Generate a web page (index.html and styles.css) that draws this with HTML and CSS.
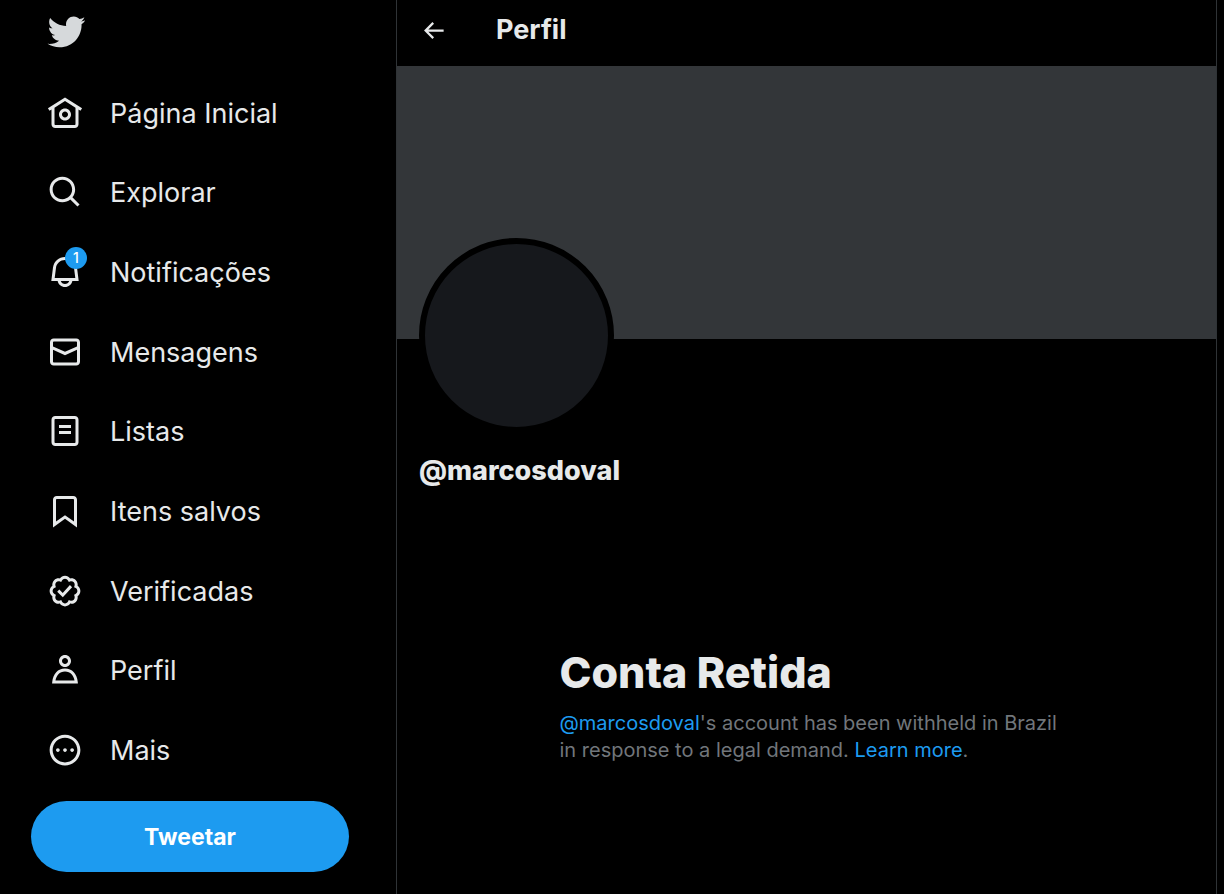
FILE: index.html
```html
<!doctype html>
<html lang="pt">
<head>
<meta charset="UTF-8">
<title>Perfil / Twitter</title>
<link rel="stylesheet" href="styles.css">
</head>
<body>
<div class="layout">
	<header class="sidebar">
		<a href="#" class="logo" aria-label="Twitter">
			<svg viewBox="0 0 24 24"><path d="M23.643 4.937c-.835.37-1.732.62-2.675.733.962-.576 1.7-1.49 2.048-2.578-.9.534-1.897.922-2.958 1.13-.85-.904-2.06-1.47-3.4-1.47-2.572 0-4.658 2.086-4.658 4.66 0 .364.042.718.12 1.06-3.873-.195-7.304-2.05-9.602-4.868-.4.69-.63 1.49-.63 2.342 0 1.616.823 3.043 2.072 3.878-.764-.025-1.482-.234-2.11-.583v.06c0 2.257 1.605 4.14 3.737 4.568-.392.106-.803.162-1.227.162-.3 0-.593-.028-.877-.082.593 1.85 2.313 3.198 4.352 3.234-1.595 1.25-3.604 1.995-5.786 1.995-.376 0-.747-.022-1.112-.065 2.062 1.323 4.51 2.093 7.14 2.093 8.57 0 13.255-7.098 13.255-13.254 0-.2-.005-.402-.014-.602.91-.658 1.7-1.477 2.323-2.41z"/></svg>
		</a>
		<nav class="menu">
			<a href="#" class="item">
				<span class="icon"><svg viewBox="0 0 24 24"><path d="M12 9c-2.209 0-4 1.791-4 4s1.791 4 4 4 4-1.791 4-4-1.791-4-4-4zm0 6c-1.105 0-2-.895-2-2s.895-2 2-2 2 .895 2 2-.895 2-2 2zm0-13.304L.622 8.807l1.06 1.696L3 9.679V19.5C3 20.881 4.119 22 5.5 22h13c1.381 0 2.5-1.119 2.5-2.5V9.679l1.318.824 1.06-1.696L12 1.696zM19 19.5c0 .276-.224.5-.5.5h-13c-.276 0-.5-.224-.5-.5V8.429l7-4.375 7 4.375V19.5z"/></svg></span>
				<span class="label">Página Inicial</span>
			</a>
			<a href="#" class="item">
				<span class="icon"><svg viewBox="0 0 24 24"><path d="M10.25 3.75c-3.59 0-6.5 2.91-6.5 6.5s2.91 6.5 6.5 6.5c1.795 0 3.419-.726 4.596-1.904 1.178-1.177 1.904-2.801 1.904-4.596 0-3.59-2.91-6.5-6.5-6.5zm-8.5 6.5c0-4.694 3.806-8.5 8.5-8.5s8.5 3.806 8.5 8.5c0 1.986-.682 3.815-1.824 5.262l4.781 4.781-1.414 1.414-4.781-4.781c-1.447 1.142-3.276 1.824-5.262 1.824-4.694 0-8.5-3.806-8.5-8.5z"/></svg></span>
				<span class="label">Explorar</span>
			</a>
			<a href="#" class="item">
				<span class="icon"><svg viewBox="0 0 24 24"><path d="M19.993 9.042C19.48 5.017 16.054 2 11.996 2s-7.49 3.021-7.999 7.051L2.866 18H7.1c.463 2.282 2.481 4 4.9 4s4.437-1.718 4.9-4h4.236l-1.143-8.958zM12 20c-1.306 0-2.417-.835-2.829-2h5.658c-.412 1.165-1.523 2-2.829 2zm-6.866-4l.847-6.698C6.364 6.272 8.941 4 11.996 4s5.627 2.268 6.013 5.295L18.864 16H5.134z"/></svg><span class="badge">1</span></span>
				<span class="label">Notificações</span>
			</a>
			<a href="#" class="item">
				<span class="icon"><svg viewBox="0 0 24 24"><path d="M1.998 5.5c0-1.381 1.119-2.5 2.5-2.5h15c1.381 0 2.5 1.119 2.5 2.5v13c0 1.381-1.119 2.5-2.5 2.5h-15c-1.381 0-2.5-1.119-2.5-2.5v-13zm2.5-.5c-.276 0-.5.224-.5.5v2.764l8 3.638 8-3.636V5.5c0-.276-.224-.5-.5-.5h-15zm15.5 5.463l-8 3.636-8-3.638V18.5c0 .276.224.5.5.5h15c.276 0 .5-.224.5-.5v-8.037z"/></svg></span>
				<span class="label">Mensagens</span>
			</a>
			<a href="#" class="item">
				<span class="icon"><svg viewBox="0 0 24 24"><path d="M3 4.5C3 3.12 4.12 2 5.5 2h13C19.88 2 21 3.12 21 4.5v15c0 1.38-1.12 2.5-2.5 2.5h-13C4.12 22 3 20.88 3 19.5v-15zM5.5 4c-.28 0-.5.22-.5.5v15c0 .28.22.5.5.5h13c.28 0 .5-.22.5-.5v-15c0-.28-.22-.5-.5-.5h-13zM16 10H8V8h8v2zm-8 2h8v2H8v-2z"/></svg></span>
				<span class="label">Listas</span>
			</a>
			<a href="#" class="item">
				<span class="icon"><svg viewBox="0 0 24 24"><path d="M4 4.5C4 3.12 5.119 2 6.5 2h11C18.881 2 20 3.12 20 4.5v18.44l-8-5.71-8 5.71V4.5zM6.5 4c-.276 0-.5.22-.5.5v14.56l6-4.29 6 4.29V4.5c0-.28-.224-.5-.5-.5h-11z"/></svg></span>
				<span class="label">Itens salvos</span>
			</a>
			<a href="#" class="item">
				<span class="icon"><svg viewBox="0 0 24 24"><path d="M8.52 3.59c.8-1.1 2.04-1.84 3.48-1.84s2.68.74 3.49 1.84c1.34-.21 2.74.14 3.76 1.16s1.37 2.42 1.16 3.77c1.1.8 1.84 2.04 1.84 3.48s-.74 2.68-1.84 3.48c.21 1.34-.14 2.75-1.16 3.77s-2.42 1.37-3.76 1.16c-.8 1.1-2.05 1.84-3.49 1.84s-2.68-.74-3.48-1.84c-1.34.21-2.75-.14-3.77-1.16-1.01-1.02-1.37-2.42-1.16-3.77-1.09-.8-1.84-2.04-1.84-3.48s.75-2.68 1.84-3.48c-.21-1.35.14-2.75 1.16-3.77s2.43-1.37 3.77-1.16zm3.48.16c-.85 0-1.66.53-2.12 1.43l-.38.77-.82-.27c-.96-.32-1.91-.12-2.51.49-.6.6-.8 1.54-.49 2.51l.27.81-.77.39c-.9.46-1.43 1.27-1.43 2.12s.53 1.66 1.43 2.12l.77.39-.27.81c-.31.97-.11 1.91.49 2.51.6.61 1.55.81 2.51.49l.82-.27.38.77c.46.9 1.27 1.43 2.12 1.43s1.66-.53 2.12-1.43l.39-.77.82.27c.96.32 1.9.12 2.51-.49.6-.6.8-1.55.48-2.51l-.26-.81.76-.39c.91-.46 1.43-1.27 1.43-2.12s-.52-1.66-1.43-2.12l-.77-.39.27-.81c.32-.97.12-1.91-.48-2.51-.61-.61-1.55-.81-2.51-.49l-.82.27-.39-.77c-.46-.9-1.27-1.43-2.12-1.43zm4.74 5.68l-6.2 6.77-3.74-3.74 1.41-1.42 2.26 2.26 4.8-5.23 1.47 1.36z"/></svg></span>
				<span class="label">Verificadas</span>
			</a>
			<a href="#" class="item">
				<span class="icon"><svg viewBox="0 0 24 24"><path d="M5.651 19h12.698c-.337-1.8-1.023-3.21-1.945-4.19C15.318 13.65 13.838 13 12 13s-3.317.65-4.404 1.81c-.922.98-1.608 2.39-1.945 4.19zm.486-5.56C7.627 11.85 9.648 11 12 11s4.373.85 5.863 2.44c1.477 1.58 2.366 3.8 2.632 6.46l.11 1.1H3.395l.11-1.1c.266-2.66 1.155-4.88 2.632-6.46zM12 4c-1.105 0-2 .9-2 2s.895 2 2 2 2-.9 2-2-.895-2-2-2zM8 6c0-2.21 1.791-4 4-4s4 1.79 4 4-1.791 4-4 4-4-1.79-4-4z"/></svg></span>
				<span class="label">Perfil</span>
			</a>
			<a href="#" class="item">
				<span class="icon"><svg viewBox="0 0 24 24"><path d="M3.75 12c0-4.56 3.69-8.25 8.25-8.25s8.25 3.69 8.25 8.25-3.69 8.25-8.25 8.25S3.75 16.56 3.75 12zM12 1.75C6.34 1.75 1.75 6.34 1.75 12S6.34 22.25 12 22.25 22.25 17.66 22.25 12 17.66 1.75 12 1.75zm-4.75 11.5c.69 0 1.25-.56 1.25-1.25s-.56-1.25-1.25-1.25S6 11.31 6 12s.56 1.25 1.25 1.25zm9.5 0c.69 0 1.25-.56 1.25-1.25s-.56-1.25-1.25-1.25-1.25.56-1.25 1.25.56 1.25 1.25 1.25zM13.25 12c0 .69-.56 1.25-1.25 1.25s-1.25-.56-1.25-1.25.56-1.25 1.25-1.25 1.25.56 1.25 1.25z"/></svg></span>
				<span class="label">Mais</span>
			</a>
		</nav>
		<button type="button" class="tweet">Tweetar</button>
	</header>
	<main class="profile">
		<div class="topbar">
			<button type="button" class="back" aria-label="Voltar"><svg viewBox="0 0 24 24"><path d="M7.414 13l5.043 5.04-1.414 1.42L3.586 12l7.457-7.46 1.414 1.42L7.414 11H21v2H7.414z"/></svg></button>
			<h2 class="title">Perfil</h2>
		</div>
		<div class="banner"></div>
		<div class="user">
			<div class="avatar"></div>
			<div class="handle">@marcosdoval</div>
		</div>
		<div class="notice">
			<h1>Conta Retida</h1>
			<p><a href="#">@marcosdoval</a>'s account has been withheld in Brazil in response to a legal demand. <a href="#">Learn more</a>.</p>
		</div>
	</main>
</div>
</body>
</html>
```
FILE: styles.css
```css
* {
	box-sizing:border-box;
	}

body {
	margin:0;
	background:#000;
	color:#e7e9ea;
	font-family:Inter, "Liberation Sans", Arial, sans-serif;
	}

a {
	color:#1d9bf0;
	text-decoration:none;
	}

svg {
	display:block;
	width:100%;
	fill:currentColor;
	}

h1, h2, p {
	margin:0;
	}

.layout {
	display:grid;
	grid-template-columns:396px 1fr;
	min-height:100vh;
	padding-right:7px;
	}

/* left menu */
.sidebar {
	display:flex;
	flex-direction:column;
	padding:12px 47px 22px 31px;
	}

.logo {
	width:40px;
	margin-left:15px;
	color:#d6d9db;
	}

.menu {
	flex:1;
	display:grid;
	grid-auto-rows:1fr;
	margin:21px 0 11px;
	}

.item {
	display:flex;
	align-items:center;
	gap:27px;
	padding-left:16px;
	color:#e7e9ea;
	font-size:27px;
	line-height:36px;
	}

.label {
	padding-top:2px;
	}

.icon {
	position:relative;
	width:36px;
	}

.badge {
	position:absolute;
	top:-7px;
	right:-4px;
	width:22px;
	height:22px;
	border-radius:50%;
	background:#1d9bf0;
	color:#fff;
	font-size:14px;
	font-weight:500;
	line-height:22px;
	text-align:center;
	}

.tweet {
	height:71px;
	border:0;
	border-radius:36px;
	background:#1d9bf0;
	color:#fff;
	font:bold 23px Inter, "Liberation Sans", Arial, sans-serif;
	}

/* profile column */
.profile {
	border:solid #2f3336;
	border-width:0 1px;
	}

.topbar {
	display:flex;
	align-items:center;
	gap:49px;
	height:66px;
	padding:0 23px 6px;
	}

.back {
	width:27px;
	padding:0;
	border:0;
	background:none;
	color:#e7e9ea;
	}

.title {
	font-size:27px;
	line-height:36px;
	}

.banner {
	aspect-ratio:3;
	background:#333639;
	}

.user {
	padding:0 22px;
	}

.avatar {
	width:195px;
	height:195px;
	margin-top:-101px;
	border:6px solid #000;
	border-radius:50%;
	background:#16181c;
	}

.handle {
	margin-top:20px;
	font-size:27px;
	font-weight:800;
	line-height:36px;
	}

.notice {
	max-width:550px;
	margin:158px auto 0;
	padding:0 22px 0 28px;
	color:#71767b;
	font-size:20px;
	line-height:27px;
	}

.notice h1 {
	margin-bottom:13px;
	color:#e7e9ea;
	font-size:43px;
	font-weight:800;
	line-height:50px;
	}
```
